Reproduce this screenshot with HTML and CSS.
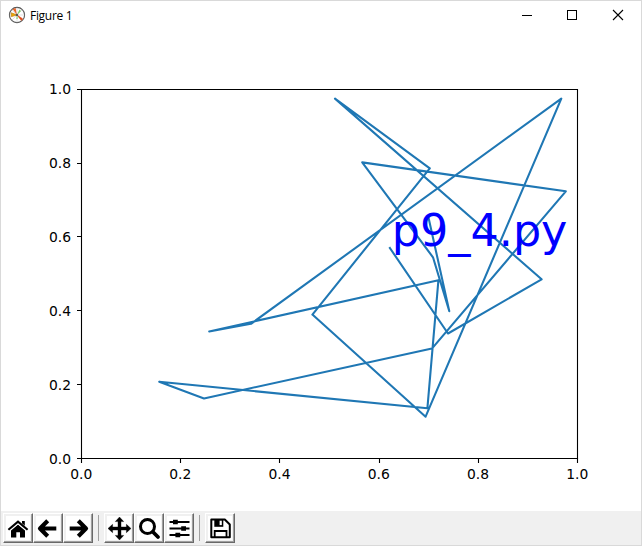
FILE: index.html
```html
<!DOCTYPE html>
<html lang="en">
<head>
<meta charset="utf-8">
<title>Figure 1</title>
<link rel="stylesheet" href="styles.css">
</head>
<body>
<div class="window">
  <header class="titlebar">
    <svg class="app-icon" width="18" height="18" viewBox="0 0 18 18">
      <circle cx="9" cy="9" r="7.6" fill="#fff" stroke="#555" stroke-width="1.1"/>
      <path d="M9 1.5v15M1.5 9h15M3.7 3.7l10.6 10.6M14.3 3.7L3.7 14.3" stroke="#ccc" stroke-width=".6"/>
      <path d="M9 9L4.6 3L7.6 2z" fill="#e8662c"/>
      <path d="M9 9L3.3 6.8V10.6z" fill="#f0a800" stroke="#c08818" stroke-width=".8"/>
      <path d="M9 9L14.6 12.8L13.3 14.4z" fill="#e04a18" stroke="#e04a18" stroke-width=".6"/>
      <path d="M9 9L11.4 3.6L13 5z" fill="#7ccb65"/>
      <path d="M9 9L8.2 13L10 12.8z" fill="#8fd87a"/>
      <circle cx="9" cy="9" r="1.2" fill="#555"/>
    </svg>
    <span class="title">Figure 1</span>
    <div class="controls">
      <svg width="46" height="29" viewBox="0 0 46 29"><path d="M18 15.5h10" stroke="#000" shape-rendering="crispEdges"/></svg>
      <svg width="45" height="29" viewBox="0 0 45 29"><rect x="17.5" y="10.5" width="9" height="9" fill="none" stroke="#000" shape-rendering="crispEdges"/></svg>
      <svg width="46" height="29" viewBox="0 0 46 29"><path d="M18 10l10 10M28 10L18 20" stroke="#000" stroke-width="1.1"/></svg>
    </div>
  </header>
  <main class="figure">
    <svg width="640" height="480" viewBox="1 31 640 480">
      <polyline class="line" points="389.9,248 448,333.5 541.6,279.3 335,98.6 429.8,168.3 312.4,314.6 425.6,416.7 561.3,98.6 251,323.8 209.2,331.4 438.4,280.3 427.4,408.2 159.2,381.8 204,398.4 431.9,348.6 565.8,191.3 362.2,162.4 433,257.3 449.3,311.2 428.6,218"/>
      <path class="axis" d="M81.5 89.5H577.5V458.5H81.5Z"/>
      <path class="axis" d="M81.5 458v5M180.5 458v5M279.5 458v5M379.5 458v5M478.5 458v5M577.5 458v5M82 458.5h-5M82 384.5h-5M82 310.5h-5M82 236.5h-5M82 163.5h-5M82 89.5h-5"/>
      <g class="tick" text-anchor="middle">
        <text x="81.3" y="479">0.0</text><text x="180.3" y="479">0.2</text><text x="279.5" y="479">0.4</text><text x="378.7" y="479">0.6</text><text x="478" y="479">0.8</text><text x="577.3" y="479">1.0</text>
      </g>
      <g class="tick" text-anchor="end">
        <text x="71" y="464">0.0</text><text x="71" y="390">0.2</text><text x="71" y="316">0.4</text><text x="71" y="242">0.6</text><text x="71" y="168">0.8</text><text x="71" y="94">1.0</text>
      </g>
      <text class="note" x="391.8" y="246">p9_4.py</text>
    </svg>
  </main>
  <footer class="toolbar">
    <button class="tool" aria-label="Home"><svg width="24" height="24" viewBox="0 0 24 24">
      <path d="M5 14.5L12 8.5L19 14.5V21.5H14V16.3H10.3V21.5H5Z"/>
      <path d="M16 5h2.8v5H16z"/>
      <path d="M2.3 14.2L12 6.1L21.7 14.2" fill="none" stroke="#fff" stroke-width="3.4"/>
      <path d="M2.4 13.8L12 5.6L21.6 13.8" fill="none" stroke="#000" stroke-width="2.1"/>
    </svg></button>
    <button class="tool" aria-label="Back"><svg width="24" height="24" viewBox="0 0 24 24"><path class="stroke" d="M20.3 12.5H5M11.7 4.8L4 12.5L11.7 20.2"/></svg></button>
    <button class="tool" aria-label="Forward"><svg width="24" height="24" viewBox="0 0 24 24"><path class="stroke" d="M3.7 12.5H19M12.3 4.8L20 12.5L12.3 20.2"/></svg></button>
    <i class="sep"></i>
    <button class="tool" aria-label="Pan"><svg width="24" height="24" viewBox="0 0 24 24">
      <path d="M12.5 1L16.7 5.6H14V11H19.4V8.3L24 12.5L19.4 16.7V14H14V19.4H16.7L12.5 24L8.3 19.4H11V14H5.6V16.7L1 12.5L5.6 8.3V11H11V5.6H8.3Z" stroke="#000" stroke-width=".4"/>
    </svg></button>
    <button class="tool" aria-label="Zoom"><svg width="24" height="24" viewBox="0 0 24 24"><circle cx="10.5" cy="10.5" r="7" fill="none" stroke="#000" stroke-width="3"/><path d="M16 16L21 21" stroke="#000" stroke-width="3.8" stroke-linecap="round"/></svg></button>
    <button class="tool" aria-label="Subplots"><svg width="24" height="24" viewBox="0 0 24 24"><path d="M2.5 6H22.5M2.5 12.5H22.5M2.5 19H22.5" stroke="#000" stroke-width="1.8"/><path d="M6 3.8h4.8v4.4H6zM14.2 10.3H19v4.4h-4.8zM8.4 16.8h4.8v4.4H8.4z"/></svg></button>
    <i class="sep"></i>
    <button class="tool" aria-label="Save"><svg width="24" height="24" viewBox="0 0 24 24"><path d="M3.3 3.5H16.8L21.8 8.5V21.3H3.3Z" fill="none" stroke="#000" stroke-width="2" stroke-linejoin="round"/><path d="M6.3 3.5h9v7.3h-9z"/><path d="M11.6 4.7h2.2v4.4h-2.2z" fill="#fff"/><path d="M6.7 21v-6h11.8V21" fill="none" stroke="#000" stroke-width="1.8"/></svg></button>
  </footer>
</div>
</body>
</html>
```
FILE: styles.css
```css
* { box-sizing: border-box; }
body { margin: 0; background: #fff; overflow: hidden; }
svg { display: block; flex: none; }
.window {
  width: 642px;
  height: 546px;
  display: flex;
  flex-direction: column;
  border: 1px solid #d9d9d9;
  background: #fff;
}
.titlebar {
  height: 30px;
  display: flex;
  align-items: flex-start;
  padding-left: 7px;
}
.app-icon { margin-top: 5px; }
.title {
  margin: 6px 0 0 4px;
  font: 12px/18px "Open Sans", "Noto Sans", sans-serif;
  letter-spacing: -0.3px;
  color: #000;
}
.controls { display: flex; margin-left: auto; margin-top: -1px; }
.figure { height: 480px; }
.line {
  fill: none;
  stroke: #1f77b4;
  stroke-width: 2.08;
  stroke-linejoin: round;
  stroke-linecap: square;
}
.axis { fill: none; stroke: #000; stroke-width: 1.1; }
.tick { font: 13.89px "DejaVu Sans", sans-serif; fill: #000; }
.note { font: 44.44px "DejaVu Sans", sans-serif; fill: #00f; }
.toolbar {
  flex: 1;
  display: flex;
  align-items: flex-start;
  padding: 2px;
  background: #f0f0f0;
}
.tool {
  width: 30px;
  height: 30px;
  padding: 0;
  display: flex;
  align-items: center;
  justify-content: center;
  border: 1px solid;
  border-color: #fff #696969 #696969 #fff;
  background: #fff;
  box-shadow: inset -1px -1px #a0a0a0, inset 0 0 0 2px #f0f0f0;
}
.stroke { fill: none; stroke: #000; stroke-width: 4.2; stroke-linejoin: round; }
.sep { width: 1px; height: 26px; margin: 2px 5px 0; background: #a0a0a0; }
```
